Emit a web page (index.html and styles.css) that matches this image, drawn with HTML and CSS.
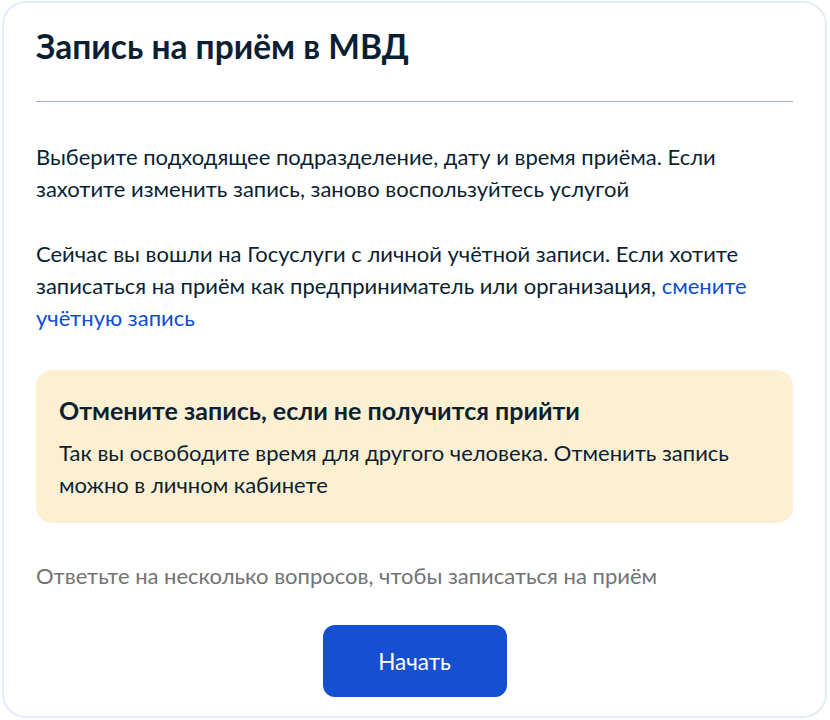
FILE: index.html
```html
<!DOCTYPE html>
<html lang="ru">
<head>
<meta charset="utf-8">
<title>Запись на приём в МВД</title>
<link rel="stylesheet" href="styles.css">
</head>
<body>
<main class="card">
  <h1 class="title">Запись на приём в МВД</h1>
  <hr class="divider">
  <p class="text text-first">Выберите подходящее подразделение, дату и время приёма. Если захотите изменить запись, заново воспользуйтесь услугой</p>
  <p class="text">Сейчас вы вошли на Госуслуги с личной учётной записи. Если хотите записаться на приём как предприниматель или организация, <a class="link" href="#">смените учётную запись</a></p>
  <section class="notice">
    <h2 class="notice-title">Отмените запись, если не получится прийти</h2>
    <p class="notice-text">Так вы освободите время для другого человека. Отменить запись можно в личном кабинете</p>
  </section>
  <p class="hint">Ответьте на несколько вопросов, чтобы записаться на приём</p>
  <div class="actions">
    <button class="btn" type="button">Начать</button>
  </div>
</main>
</body>
</html>
```

FILE: styles.css
```css
* { box-sizing: border-box; }
html, body { margin: 0; padding: 0; background: #ffffff; }
body {
  font-family: Lato, "Noto Sans", sans-serif;
  color: #0b1f33;
  padding: 1px 3px 2px 2px;
}
.card {
  border: 2px solid #e4ecfa;
  border-radius: 24px;
  background: #ffffff;
  padding: 23px 32px 20px 32px;
  height: 717px;
}
.title {
  margin: 0;
  font-size: 33.5px;
  line-height: 40px;
  font-weight: 700;
  color: #0b1f33;
}
.divider {
  border: 0;
  height: 1px;
  background: #98ade4;
  margin: 35px 0 39px;
}
.text {
  margin: 0 0 33px;
  font-size: 22px;
  line-height: 32px;
}
.link { color: #0d4cd3; text-decoration: none; }
.notice {
  background: #fdf0d2;
  border-radius: 16px;
  padding: 24px 24px 22px 23px;
  margin: 36px 0 37px;
}
.notice-title {
  margin: 0 0 11px;
  font-size: 25px;
  line-height: 32px;
  font-weight: 700;
}
.notice-text {
  margin: 0;
  font-size: 22px;
  line-height: 32px;
}
.hint {
  margin: 0 0 33px;
  font-size: 22px;
  line-height: 32px;
  color: #737373;
}
.actions { display: flex; justify-content: center; }
.btn {
  font-family: Lato, "Noto Sans", sans-serif;
  font-size: 22.5px;
  color: #ffffff;
  background: #1550d2;
  border: 0;
  border-radius: 12px;
  width: 184px;
  height: 72px;
}
```
